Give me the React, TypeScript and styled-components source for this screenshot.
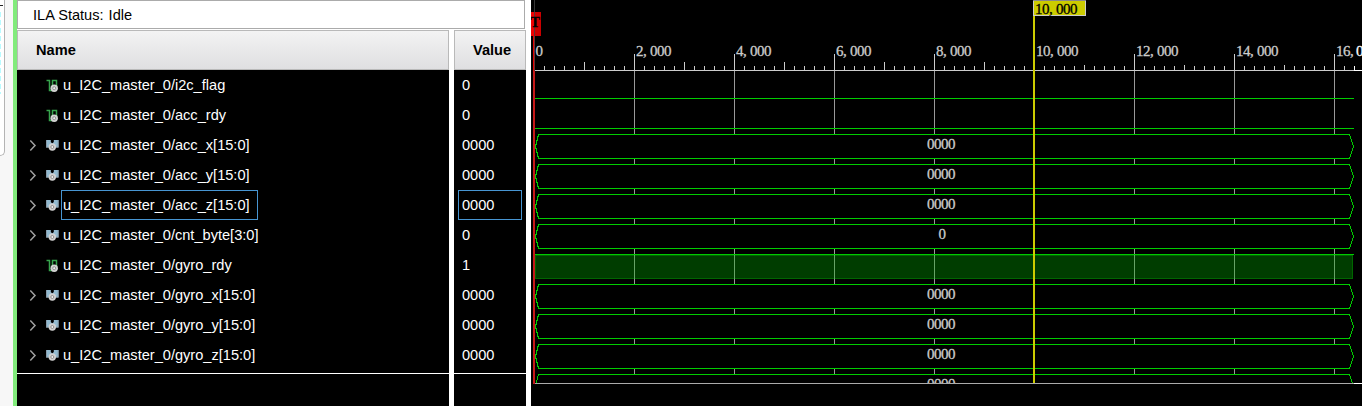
import React from "react";
import styled, { createGlobalStyle } from "styled-components";

const GlobalStyle = createGlobalStyle`
  body { margin: 0; background: #fff; overflow: hidden; }
  * { box-sizing: border-box; }
`;

const Page = styled.div`
  display: flex;
  width: 1362px;
  height: 406px;
  overflow: hidden;
  background: #fff;
  font-family: "Liberation Sans", Arial, sans-serif;
  font-size: 14.6px;
  color: #000;
`;

const Gutter = styled.div`
  width: 13px;
  flex: none;
  background: #f7f7f7;
`;

const SidePanel = styled.div`
  width: 5px;
  height: 156px;
  background: #fff;
  border-right: 1px solid #b4b4b4;
  border-bottom: 1px solid #b4b4b4;
  border-bottom-right-radius: 5px;
  padding-top: 5px;
`;

const SideMark = styled.div`
  width: 3px;
  height: 1px;
  background: #222;
`;

const SideFringe = styled.div`
  width: 1px;
  height: 82px;
  margin-top: 6px;
  background: repeating-linear-gradient(#b8fbff 0 5px, #fff 5px 8px);
`;

const ActiveEdge = styled.div`
  width: 4px;
  flex: none;
  background: #82eb7c;
`;

const SignalPane = styled.div`
  display: flex;
  flex-direction: column;
  width: 514px;
  flex: none;
`;

const StatusBar = styled.div`
  display: flex;
  align-items: center;
  gap: 5px;
  width: 508px;
  height: 29px;
  padding: 1px 0 0 15px;
  border: 1px solid #ababab;
  margin-bottom: 1px;
  white-space: nowrap;
`;

const Columns = styled.div`
  display: flex;
  gap: 5px;
  flex: 1;
`;

const Column = styled.div<{ $width: number }>`
  display: flex;
  flex-direction: column;
  width: ${(p) => p.$width}px;
  background: #000;
  color: #fff;
`;

const ColumnHeader = styled.div`
  height: 40px;
  padding-left: 18px;
  line-height: 39px;
  font-weight: bold;
  color: #000;
  background: linear-gradient(#f3f3f3, #dfdfe1);
  border: 1px solid #b9b9b9;
`;

const Rows = styled.div`
  height: 304px;
  border-bottom: 1px solid #fff;
`;

const NameRow = styled.div`
  display: flex;
  align-items: center;
  height: 30px;
  padding-left: 12px;
`;

const IconSlot = styled.span<{ $width: number }>`
  display: flex;
  width: ${(p) => p.$width}px;
  flex: none;
`;

const Label = styled.span<{ $selected?: boolean }>`
  height: 30px;
  line-height: 28px;
  padding: 0 7px 0 1px;
  border: 1px solid ${(p) => (p.$selected ? "#4795d2" : "transparent")};
  white-space: nowrap;
`;

const ValueRow = styled.div<{ $selected?: boolean }>`
  height: 30px;
  line-height: 28px;
  margin: 0 4px;
  padding-left: 3px;
  border: 1px solid ${(p) => (p.$selected ? "#4795d2" : "transparent")};
`;

const WavePane = styled.div`
  flex: 1;
  background: #000;
`;

const WaveSvg = styled.svg`
  display: block;
`;

const WaveText = styled.text<{ $bold?: boolean }>`
  font-family: "Liberation Serif", "Times New Roman", serif;
  font-size: ${(p) => (p.$bold ? 14 : 15)}px;
  font-weight: ${(p) => (p.$bold ? "bold" : "normal")};
`;

type Signal = { name: string; value: string; bus: boolean; selected?: boolean };

const signals: Signal[] = [
  { name: "i2c_flag", value: "0", bus: false },
  { name: "acc_rdy", value: "0", bus: false },
  { name: "acc_x[15:0]", value: "0000", bus: true },
  { name: "acc_y[15:0]", value: "0000", bus: true },
  { name: "acc_z[15:0]", value: "0000", bus: true, selected: true },
  { name: "cnt_byte[3:0]", value: "0", bus: true },
  { name: "gyro_rdy", value: "1", bus: false },
  { name: "gyro_x[15:0]", value: "0000", bus: true },
  { name: "gyro_y[15:0]", value: "0000", bus: true },
  { name: "gyro_z[15:0]", value: "0000", bus: true },
];

const Probe = ({ cx, cy }: { cx: number; cy: number }) => (
  <>
    <circle cx={cx} cy={cy} r="3.7" fill="#d2d2d2" />
    <circle cx={cx} cy={cy} r="1.5" fill="#eee" stroke="#808080" strokeWidth="0.8" />
  </>
);

const BitIcon = () => (
  <svg width="13" height="13" viewBox="0 0 13 13">
    <path d="M0.5 1.5H3.5V11.5H6.5V1.5H10.5V7" fill="none" stroke="#36a44c" strokeWidth="1.5" />
    <Probe cx={8.2} cy={9.2} />
  </svg>
);

const BusIcon = () => (
  <svg width="13" height="13" viewBox="0 0 13 13">
    <path d="M0 1H4.8V3L6.3 4.5L7.8 3V1H12.6V8.5H0Z" fill="#93bbd1" />
    <path d="M0.4 1V8.3H3M12.2 1V8.3H10" fill="none" stroke="#87929a" strokeWidth="0.8" />
    <Probe cx={6.3} cy={8} />
  </svg>
);

const Chevron = () => (
  <svg width="8" height="12" viewBox="0 0 8 12">
    <path d="M1.3 1.6L6 6.5L1.3 11.4" fill="none" stroke="#a0a0a0" strokeWidth="1.5" />
  </svg>
);

const PITCH = 7;

type WaveLabelProps = { x: number; y: number; text: string; fill?: string; bold?: boolean };

const WaveLabel = ({ x, y, text, fill = "#ccc", bold }: WaveLabelProps) => (
  <WaveText
    x={Array.from(text, (_, i) => x + i * PITCH).join(" ")}
    y={y}
    fill={fill}
    stroke={fill}
    strokeWidth="0.3"
    $bold={bold}
  >
    {text}
  </WaveText>
);

const START = 4;
const END = 823;
const majors = [1, 2, 3, 4, 5, 6, 7, 8];
const busTops = [134, 164, 194, 224, 284, 314, 344, 374];

const Ruler = () => (
  <g shapeRendering="crispEdges">
    {Array.from({ length: 82 }, (_, i) => i + 1)
      .filter((i) => i % 10 !== 0)
      .map((i) => {
        const half = i % 10 === 5;
        const top = half ? (i < 50 ? 62 : 65) : 66;
        return <rect key={i} x={3 + i * 10} y={top} width="1" height={70 - top} fill={i === 82 ? "#fff" : "#ccc"} />;
      })}
    {majors.map((m) => (
      <g key={m}>
        <rect x={3 + m * 100} y="71" width="1" height="308" fill="#999" />
        <rect x={3 + m * 100} y="54" width="1" height="17" fill="#ccc" />
      </g>
    ))}
    <rect x={START} y="70" width={END - START} height="1" fill="#ccc" />
    <rect x={END} y="70" width="8" height="1" fill="#fff" />
  </g>
);

const BusWave = ({ y, text }: { y: number; text: string }) => (
  <g>
    <path
      d={`M7.5 ${y + 0.5}H818.5L822.5 ${y + 12.5}L818.5 ${y + 24.5}H7.5L4.5 ${y + 12.5}Z`}
      fill="#000"
      stroke="#00cc00"
      shapeRendering="crispEdges"
    />
    <WaveLabel x={text.length > 1 ? 396 : 407.5} y={y + 15} text={text} />
  </g>
);

const Waveform = () => (
  <WaveSvg width="831" height="406" viewBox="0 0 831 406">
    <defs>
      <clipPath id="plot">
        <rect width="831" height="383" />
      </clipPath>
    </defs>
    <Ruler />
    <WaveLabel x={4.5} y={56} text="0" />
    {majors.slice(0, 7).map((m) => (
      <WaveLabel key={m} x={5 + m * 100} y={56} text={`${m * 2},000`} />
    ))}
    <WaveLabel x={805} y={56} text="16," />
    <WaveLabel x={825} y={56} text="0" fill="#fff" />
    <g clipPath="url(#plot)">
      <g shapeRendering="crispEdges">
        <rect x={START} y="98" width={END - START} height="1" fill="#00cc00" />
        <rect x={START} y="128" width={END - START} height="1" fill="#00cc00" />
        <rect x={START} y="255" width={END - START - 1} height="24" fill="#006600" />
        <rect x={START + 1} y="256" width={END - START - 3} height="22" fill="#003d00" />
        {majors.map((m) => (
          <rect key={m} x={3 + m * 100} y="255" width="1" height="24" fill="#66a366" />
        ))}
        <rect x={START} y="254" width={END - START} height="1" fill="#00cc00" />
      </g>
      {busTops.map((y) => (
        <BusWave key={y} y={y} text={y === 224 ? "0" : "0000"} />
      ))}
    </g>
    <g shapeRendering="crispEdges">
      <rect x="2" y="383" width={END - 2} height="1" fill="#aaa" />
      <rect x={END} y="383" width="8" height="1" fill="#fff" />
      <rect x="0" y="12" width="3" height="24" fill="#f00000" />
      <rect x="3" y="12" width="7" height="24" fill="#cc0000" />
      <rect x="2" y="36" width="2" height="35" fill="#e00000" />
      <rect x="2" y="71" width="2" height="313" fill="#c41818" />
      <rect x="3" y="0" width="1" height="71" fill="#444" opacity="0.8" />
    </g>
    <WaveLabel x={-0.5} y={27} text="T" fill="#000" bold />
    <g shapeRendering="crispEdges">
      <rect x="502" y="0" width="2" height="383" fill="#cccc00" />
      <rect x="502" y="0" width="53" height="16" fill="#cccccc" />
      <rect x="503" y="1" width="51" height="14" fill="#cccc00" />
      <rect x="502" y="0" width="53" height="1" fill="#888" />
    </g>
    <WaveLabel x={504} y={14} text="10,000" fill="#000" />
  </WaveSvg>
);

export default function App() {
  return (
    <Page>
      <GlobalStyle />
      <Gutter>
        <SidePanel>
          <SideMark />
          <SideFringe />
        </SidePanel>
      </Gutter>
      <ActiveEdge />
      <SignalPane>
        <StatusBar>
          <span>ILA Status:</span>
          <span>Idle</span>
        </StatusBar>
        <Columns>
          <Column $width={432}>
            <ColumnHeader>Name</ColumnHeader>
            <Rows>
              {signals.map((s) => (
                <NameRow key={s.name}>
                  <IconSlot $width={17}>{s.bus && <Chevron />}</IconSlot>
                  <IconSlot $width={15}>{s.bus ? <BusIcon /> : <BitIcon />}</IconSlot>
                  <Label $selected={s.selected}>u_I2C_master_0/{s.name}</Label>
                </NameRow>
              ))}
            </Rows>
          </Column>
          <Column $width={72}>
            <ColumnHeader>Value</ColumnHeader>
            <Rows>
              {signals.map((s) => (
                <ValueRow key={s.name} $selected={s.selected}>
                  {s.value}
                </ValueRow>
              ))}
            </Rows>
          </Column>
        </Columns>
      </SignalPane>
      <WavePane>
        <Waveform />
      </WavePane>
    </Page>
  );
}
